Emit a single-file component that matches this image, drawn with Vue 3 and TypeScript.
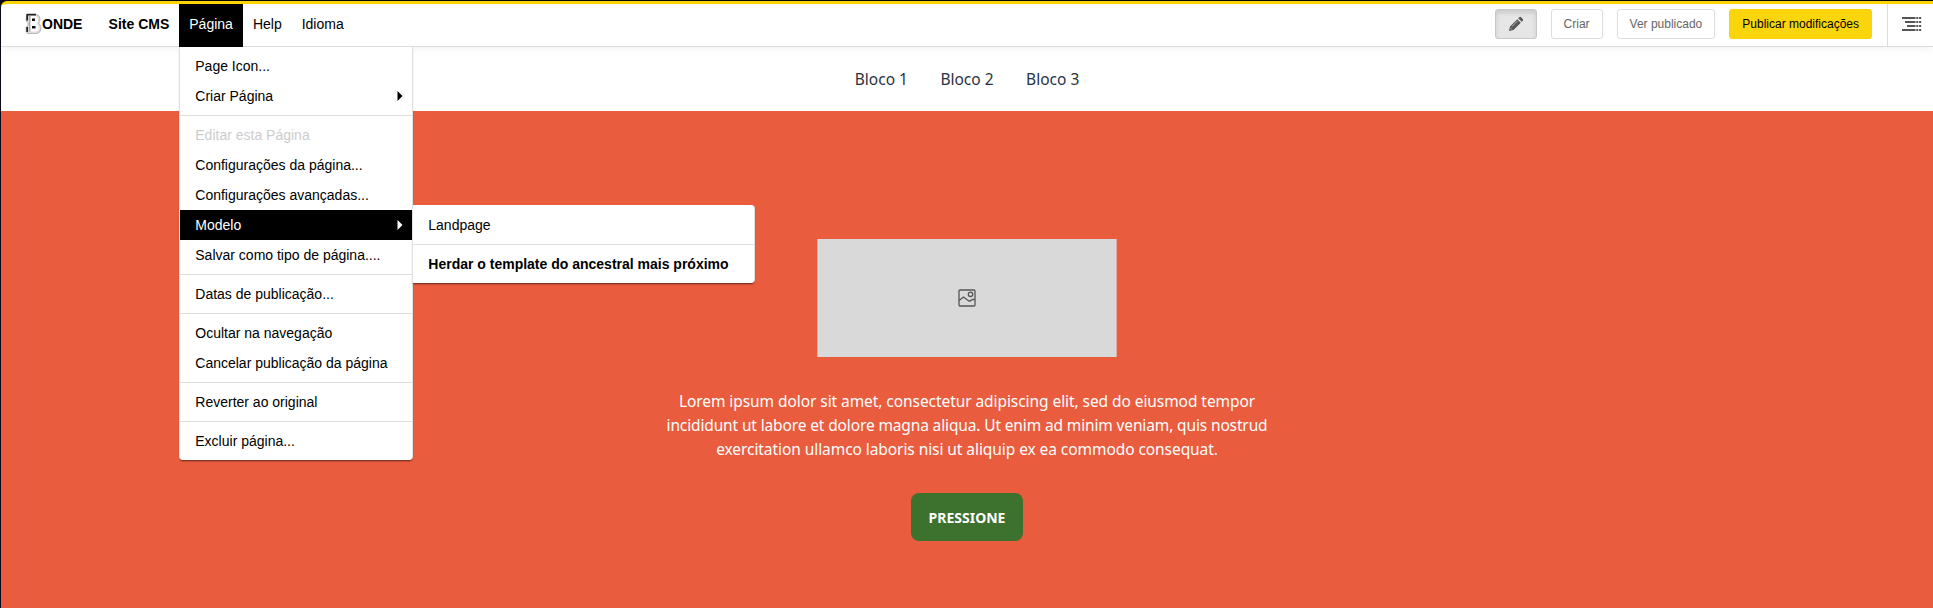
<script setup lang="ts">
interface MenuItem {
  label: string
  disabled?: boolean
  bold?: boolean
  arrow?: boolean
  active?: boolean
  children?: MenuItem[][]
}

const groups: MenuItem[][] = [
  [{ label: 'Page Icon...' }, { label: 'Criar Página', arrow: true }],
  [
    { label: 'Editar esta Página', disabled: true },
    { label: 'Configurações da página...' },
    { label: 'Configurações avançadas...' },
    {
      label: 'Modelo',
      arrow: true,
      active: true,
      children: [
        [{ label: 'Landpage' }],
        [{ label: 'Herdar o template do ancestral mais próximo', bold: true }],
      ],
    },
    { label: 'Salvar como tipo de página....' },
  ],
  [{ label: 'Datas de publicação...' }],
  [{ label: 'Ocultar na navegação' }, { label: 'Cancelar publicação da página' }],
  [{ label: 'Reverter ao original' }],
  [{ label: 'Excluir página...' }],
]

const blocks: string[] = ['Bloco 1', 'Bloco 2', 'Bloco 3']
</script>

<template>
  <div class="page">
    <header class="toolbar">
      <a class="brand">
        <svg class="logo" width="17" height="22" viewBox="0 0 17 22">
          <path d="M1.500 1.500H11Q15 2 15 6Q15 9 13.500 10Q16 12 16 15Q16 19.500 12 20.500H2.500L1 18.500V14L3 12.500V9.500L1 8Z" fill="#dedede" stroke="#a8a8a8" stroke-width=".8" />
          <path d="M5.500 3V18.500H10.500Q13.800 18 13.800 15Q13.800 12 11.500 10.800Q13.200 9.500 13.200 7Q12.800 3 9.500 3Z" fill="#fff" />
          <path d="M1.500 1.700H11M2.200 2V7.500M2.200 14V19" fill="none" stroke="#222" stroke-width="1.700" />
          <path d="M4.800 3V18.500" stroke="#777" stroke-width=".7" />
          <path d="M7 5.500H10V8H7ZM7 13H10.500V15.500H7Z" fill="#111" />
        </svg>
        <span>ONDE</span>
      </a>
      <nav class="main-nav">
        <div class="entry strong">Site CMS</div>
        <div class="entry open">
          Página
          <ul class="menu">
            <template v-for="(group, g) in groups" :key="g">
              <li v-if="g > 0" class="divider"></li>
              <li
                v-for="item in group"
                :key="item.label"
                class="item"
                :class="{ disabled: item.disabled, active: item.active }"
              >
                {{ item.label }}
                <svg v-if="item.arrow" class="arrow" width="6" height="10" viewBox="0 0 6 10">
                  <path d="M.5 0L5.500 5L.5 10Z" fill="currentColor" />
                </svg>
                <ul v-if="item.children" class="menu submenu">
                  <template v-for="(sub, s) in item.children" :key="s">
                    <li v-if="s > 0" class="divider"></li>
                    <li v-for="child in sub" :key="child.label" class="item" :class="{ strong: child.bold }">
                      {{ child.label }}
                    </li>
                  </template>
                </ul>
              </li>
            </template>
          </ul>
        </div>
        <div class="entry">Help</div>
        <div class="entry">Idioma</div>
      </nav>
      <div class="actions">
        <button class="btn pressed" aria-label="Editar">
          <svg width="16" height="16" viewBox="0 0 16 16">
            <path d="M1 15L2 10.500L9.300 3.200L12.800 6.700L5.500 14ZM10.200 2.300L11.300 1.200Q12.200.500 13.100 1.300L14.700 2.900Q15.500 3.800 14.800 4.700L13.700 5.800Z" fill="#555" />
            <path d="M4 10.500L9.500 5M2.600 12.200L3.900 13.500" stroke="#e2e2e2" stroke-width=".7" />
          </svg>
        </button>
        <button class="btn">Criar</button>
        <button class="btn">Ver publicado</button>
        <button class="btn primary">Publicar modificações</button>
      </div>
      <div class="structure">
        <svg width="20" height="15" viewBox="0 0 20 15">
          <path d="M0 1H13.500M3 5H13.500M5 9H13.500M0 13H13.500" stroke="#555" stroke-width="1.900" />
          <path d="M14.300 1H20M14.300 5H20M14.300 9H20M14.300 13H20" stroke="#555" stroke-width="1.900" stroke-dasharray="2 .8" />
        </svg>
      </div>
    </header>

    <nav class="block-nav">
      <a v-for="b in blocks" :key="b">{{ b }}</a>
    </nav>

    <main class="hero">
      <div class="placeholder">
        <svg width="18" height="18" viewBox="0 0 18 18" fill="none" stroke="#555" stroke-width="1.300">
          <rect x="1" y="1" width="16" height="16" rx="1" />
          <circle cx="12.500" cy="5.300" r="2.200" />
          <path d="M1 11.500L5.500 8L10.500 11.800Q12 12.500 13.500 11L15 10.300L17 11" />
        </svg>
      </div>
      <p class="copy">
        <span class="l1">Lorem ipsum dolor sit amet, consectetur adipiscing elit, sed do eiusmod tempor</span>
        <span class="l2">incididunt ut labore et dolore magna aliqua. Ut enim ad minim veniam, quis nostrud</span>
        <span class="l3">exercitation ullamco laboris nisi ut aliquip ex ea commodo consequat.</span>
      </p>
      <button class="cta">PRESSIONE</button>
    </main>
  </div>
</template>

<style>
body {
  margin: 0;
  background: #0b0915;
}
</style>

<style scoped>
.page {
  box-sizing: border-box;
  height: 608px;
  padding: 1px 0 0 1px;
  display: flex;
  flex-direction: column;
  overflow: hidden;
  font-family: "Liberation Sans", Arial, sans-serif;
}
.toolbar {
  position: relative;
  z-index: 2;
  box-sizing: border-box;
  flex: none;
  height: 46px;
  border-top: 3px solid #ffd500;
  border-bottom: 1px solid #ddd;
  border-top-left-radius: 6px;
  background: #fff;
  box-shadow: 0 0 10px rgba(0, 0, 0, 0.08);
  display: flex;
  font-size: 14px;
  color: #000;
}
.brand {
  display: flex;
  align-items: center;
  width: 73.6px;
  padding-left: 24px;
  font-weight: bold;
}
.brand span {
  margin-top: -2px;
}
.logo {
  margin-top: -3px;
}
.main-nav {
  display: flex;
}
.entry {
  position: relative;
  height: 43px;
  padding: 0 10px;
  line-height: 40px;
}
.strong {
  font-weight: bold;
}
.open {
  background: #000;
  color: #fff;
}
.menu {
  position: absolute;
  top: 43px;
  left: 0;
  box-sizing: border-box;
  width: 234px;
  margin: 0;
  padding: 4px 0;
  list-style: none;
  background: #fff;
  color: #000;
  border: solid #e0e0e0;
  border-width: 0 1px;
  border-radius: 0 0 4px 4px;
  box-shadow: 0 2px 2px -1px rgba(0, 0, 0, 0.6);
}
.item {
  position: relative;
  height: 30px;
  padding-left: 15px;
  line-height: 30px;
  font-size: 14px;
  white-space: nowrap;
}
.disabled {
  color: #ccc;
}
.active {
  background: #000;
  color: #fff;
}
.divider {
  height: 1px;
  margin: 4px 0;
  background: #ddd;
}
.arrow {
  position: absolute;
  right: 9px;
  top: 10px;
}
.submenu {
  top: -5px;
  left: 232px;
  width: 343px;
  padding-top: 5px;
  border-radius: 0 4px 4px 0;
}
.actions {
  display: flex;
  gap: 14px;
  margin-left: auto;
  padding: 5px 15px 0 0;
}
.btn {
  box-sizing: border-box;
  height: 30px;
  padding: 0 12px;
  display: flex;
  align-items: center;
  border: 1px solid #ddd;
  border-radius: 3px;
  background: #fff;
  color: #666;
  font-family: inherit;
  font-size: 12px;
}
.pressed {
  background: #e6e6e6;
  border-color: #c8c8c8;
  box-shadow: inset 0 3px 5px rgba(0, 0, 0, 0.12);
}
.primary {
  border-color: #f9d408;
  background: #fbd50b;
  color: #000;
}
.structure {
  box-sizing: border-box;
  width: 46px;
  padding: 13px 0 0 14px;
  border-left: 1px solid #ddd;
}
.block-nav {
  flex: none;
  height: 64px;
  background: #fff;
  display: flex;
  justify-content: center;
  align-items: center;
  gap: 32.5px;
  color: #2a3342;
  font: 15.5px "Noto Sans", sans-serif;
}
.hero {
  flex: 1;
  background: #e95c3e;
  display: flex;
  flex-direction: column;
  align-items: center;
}
.placeholder {
  box-sizing: border-box;
  flex: none;
  width: 300px;
  height: 118px;
  margin-top: 128px;
  border: solid #dfaaa0;
  border-width: 0 1px;
  background: #d9d9d9;
  display: flex;
  align-items: center;
  justify-content: center;
}
.copy {
  margin: 32px 0 0;
  display: flex;
  flex-direction: column;
  align-items: center;
  color: #fff;
  font: 15.5px/24px "Noto Sans", sans-serif;
  white-space: nowrap;
}
.l1,
.l3 {
  letter-spacing: -0.07px;
}
.l2 {
  letter-spacing: -0.135px;
}
.cta {
  width: 112px;
  height: 48px;
  margin-top: 32px;
  padding: 0;
  border: 0;
  border-radius: 8px;
  background: #3c722d;
  color: #fff;
  font: bold 14px "Noto Sans", sans-serif;
}
</style>
